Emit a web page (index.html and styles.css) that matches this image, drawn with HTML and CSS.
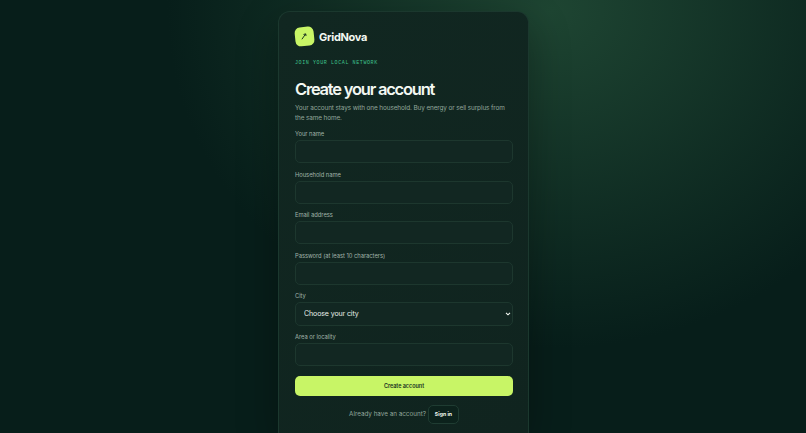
FILE: index.html
```
<!DOCTYPE html>
<html lang="en">
<head>
    <meta charset="UTF-8">
    <meta name="viewport" content="width=device-width, initial-scale=1.0">
    <title>GridNova</title>

    <link rel="stylesheet" href="styles.css">
</head>
<body>

    <main class="card">

        <div class="brand">
            <span class="brand-mark">
                <svg viewBox="0 0 8 8" width="8" height="8"><path d="M1.6 7L5.8 2.2M3.7 2.4L6 2L6 4.2" /></svg>
            </span>
            <span class="brand-name">GridNova</span>
        </div>

        <p class="eyebrow">JOIN YOUR LOCAL NETWORK</p>
        <h1>Create your account</h1>
        <p class="intro">Your account stays with one household. Buy energy or sell surplus from<br>the same home.</p>

        <form>
            <label for="name">Your name</label>
            <input id="name" type="text">

            <label for="household">Household name</label>
            <input id="household" type="text">

            <label for="email">Email address</label>
            <input id="email" type="email">

            <label for="password">Password (at least 10 characters)</label>
            <input id="password" type="password">

            <label for="city">City</label>
            <div class="select">
                <select id="city">
                    <option>Choose your city</option>
                </select>
                <svg class="chevron" viewBox="0 0 6 4" width="6" height="4"><path d="M1 0.8L3 2.8L5 0.8" /></svg>
            </div>

            <label for="area">Area or locality</label>
            <input id="area" type="text">

            <button class="submit" type="button">Create account</button>
        </form>

        <div class="switch">
            <span>Already have an account?</span>
            <button class="signin" type="button">Sign in</button>
        </div>

    </main>

</body>
</html>
```

FILE: styles.css
```
*{
    box-sizing: border-box;
}

body{
    margin: 0;
    height: 433px;
    overflow: hidden;
    padding: 11px 0 0 1px;
    background: radial-gradient(385px 338px at 68.5% 10px, #1e4532, #071e1a);
    color: #f3f8f2;
    font-family: Inter, "Open Sans", sans-serif;
}

.card{
    width: 251px;
    height: 422px;
    margin: 0 auto;
    padding: 15px 15px 0 16px;
    border: 1px solid #1b382e;
    border-bottom: none;
    border-radius: 12px 12px 0 0;
    background: linear-gradient(145deg, #112721, #10241f);
    box-shadow: 0 14px 42px rgba(0, 0, 0, 0.3);
}

.brand{
    display: flex;
    align-items: center;
    gap: 5.5px;
    height: 19px;
}

.brand-mark{
    display: flex;
    align-items: center;
    justify-content: center;
    width: 18.5px;
    height: 18.5px;
    border-radius: 5.5px;
    background: #c8f566;
    transform: rotate(-6deg);
}

.brand-mark path{
    fill: none;
    stroke: #12291f;
    stroke-width: 0.9;
}

.brand-name{
    font-size: 11px;
    font-weight: 700;
    letter-spacing: -0.3px;
}

.eyebrow{
    margin: 13.5px 0 0;
    color: #3fc48d;
    font-family: "Liberation Mono", monospace;
    font-size: 5px;
    line-height: 6px;
    letter-spacing: 0.6px;
}

h1{
    margin: 13px 0 0;
    font-size: 16.5px;
    font-weight: 600;
    line-height: 20px;
    letter-spacing: -1.22px;
    white-space: nowrap;
}

.intro{
    margin: 4px 0 7.5px;
    color: #91a69b;
    font-size: 6.4px;
    line-height: 10px;
    letter-spacing: -0.1px;
    white-space: nowrap;
}

label{
    display: block;
    height: 10px;
    color: #a0b3a9;
    font-size: 5.8px;
    line-height: 8px;
    letter-spacing: -0.03px;
}

input, select{
    display: block;
    width: 100%;
    height: 23px;
    margin: 0 0 7.5px;
    padding: 0 8px;
    border: 1px solid #1d372e;
    border-radius: 5px;
    background: #122722;
    color: #e8f0ea;
    font-family: inherit;
    font-size: 7px;
    letter-spacing: -0.1px;
    outline: none;
    appearance: none;
}

.select{
    position: relative;
}

.select select{
    height: 23.5px;
}

.chevron{
    position: absolute;
    right: 2px;
    top: 10px;
}

.chevron path{
    fill: none;
    stroke: #f3f8f2;
    stroke-width: 1.1;
}

button{
    font-family: inherit;
    cursor: pointer;
}

.submit{
    display: block;
    width: 100%;
    height: 20.5px;
    margin-top: 9.8px;
    padding: 0;
    border: none;
    border-radius: 5px;
    background: #c8f566;
    color: #18301f;
    font-size: 5.5px;
    font-weight: 600;
    letter-spacing: -0.04px;
}

.switch{
    display: flex;
    align-items: center;
    justify-content: center;
    gap: 2px;
    margin-top: 8.7px;
    color: #91a69b;
    font-size: 6.3px;
}

.signin{
    width: 31px;
    height: 19px;
    padding: 0;
    border: 1px solid #1f3c32;
    border-radius: 5px;
    background: #0c221c;
    color: #f3f8f2;
    font-size: 5.2px;
    font-weight: 700;
}
```
